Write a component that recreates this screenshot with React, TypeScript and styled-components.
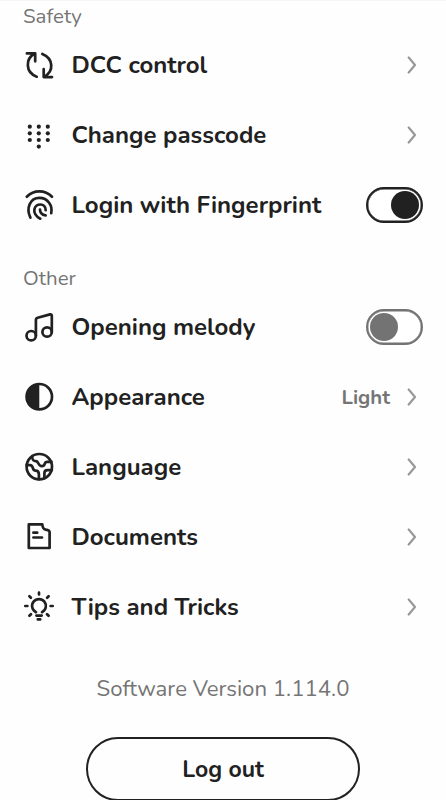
import React, { useState } from 'react';
import styled, { createGlobalStyle } from 'styled-components';

const GlobalStyle = createGlobalStyle`
  * {
    box-sizing: border-box;
  }

  body {
    margin: 0;
    background: #fefefe;
    color: #212121;
    font-family: Nunito, Lato, "Open Sans", sans-serif;
    overflow: hidden;
  }
`

const RefreshIcon = () => (
  <Icon viewBox="0 0 32 32">
    <path d="M3.9 4.4H12.2V12.3M11.8 4.8C2.2 9.5 2.2 23.5 13.7 27.7" />
    <path d="M19.3 5C30.6 9.6 31.2 22.3 21.2 27.6M20.7 20.2V28.1H29" />
  </Icon>
)

const KeypadIcon = () => (
  <Icon viewBox="0 0 32 32">
    <g fill="currentColor" stroke="none">
      {[7.7, 14.3, 21].map((y) =>
        [6.8, 15.8, 24.8].map((x) => <circle key={`${x}-${y}`} cx={x} cy={y} r="2.1" />)
      )}
      <circle cx="15.8" cy="27.6" r="2.1" />
    </g>
  </Icon>
)

const FingerprintIcon = () => (
  <Icon viewBox="0 0 32 32">
    <path d="M3.8 7.7C10.8 .5 22 .5 29 7.7" />
    <path d="M7.4 28.7C2.8 19 7.2 8.9 16.4 8.9C24.8 8.9 29.9 16.6 28.2 24.2" />
    <path d="M17.3 29.7C12.8 27.5 10.7 23.4 11.4 20.2C12.7 13.8 22.7 13.7 22.7 21.2" />
    <path d="M17 20.6C17 23.8 18.8 26 22.6 26.4" />
  </Icon>
)

const MusicIcon = () => (
  <Icon viewBox="0 0 32 32">
    <circle cx="8.2" cy="24.7" r="4.7" />
    <circle cx="24.1" cy="21" r="4.7" />
    <path d="M12.9 24.7V9Q12.9 7.2 14.7 6.7L27 3.4Q28.8 3 28.8 4.8V21" />
  </Icon>
)

const ContrastIcon = () => (
  <Icon viewBox="0 0 32 32">
    <circle cx="16.3" cy="15.7" r="12.7" />
    <path d="M16.3 3A12.7 12.7 0 0 0 16.3 28.4Z" fill="currentColor" stroke="none" />
  </Icon>
)

const GlobeIcon = () => (
  <Icon viewBox="0 0 32 32">
    <circle cx="16.3" cy="15.7" r="12.7" />
    <path d="M9.2 5.2C9.2 9 10.2 10 13 10.2C16 10.4 14.9 15.2 18.9 15.2C23 15.2 20.5 10.8 24 10.8H28.5" />
    <path d="M3.7 14.1H7C11.2 14.1 8.5 19.7 12.5 19.7C15.6 19.7 15.9 21.4 15.9 23.5V28.2" />
    <path d="M28.8 19.2H24.5Q21.4 19.2 21.4 22.3V27.2" />
  </Icon>
)

const DocumentIcon = () => (
  <Icon viewBox="0 0 32 32">
    <path d="M5.8 3.4H19.3Q19.8 8.2 22.6 8.6Q26.6 9.2 26.6 11V27H5.8Z" />
    <path d="M10.4 11.7H14.2M10.4 16.5H19" />
  </Icon>
)

const BulbIcon = () => (
  <Icon viewBox="0 0 32 32">
    <path d="M13 21.2A6.9 6.9 0 1 1 19 21.2" />
    <path d="M13.4 24.6H18.7M14.8 28.4H17.2" />
    <path d="M16 1.7V3.5M2.3 15H4.4M27.6 15H29.7M6.4 5.2L7.9 6.7M25.6 5.2L24.1 6.7M6.4 24.8L8 23.2M25.6 24.8L24 23.2" />
  </Icon>
)

const Chevron = () => (
  <ChevronIcon viewBox="0 0 10 18">
    <path d="M1.7 1.5L8 9L1.7 16.5" />
  </ChevronIcon>
)

interface Item {
  label: string
  icon: React.ReactNode
  value?: string
  toggle?: boolean
  on?: boolean
}

const safetyItems: Item[] = [
  { label: 'DCC control', icon: <RefreshIcon /> },
  { label: 'Change passcode', icon: <KeypadIcon /> },
  { label: 'Login with Fingerprint', icon: <FingerprintIcon />, toggle: true, on: true },
]

const otherItems: Item[] = [
  { label: 'Opening melody', icon: <MusicIcon />, toggle: true },
  { label: 'Appearance', icon: <ContrastIcon />, value: 'Light' },
  { label: 'Language', icon: <GlobeIcon /> },
  { label: 'Documents', icon: <DocumentIcon /> },
  { label: 'Tips and Tricks', icon: <BulbIcon /> },
]

const SettingsRow = ({ label, icon, value, toggle, on = false }: Item) => {
  const [isOn, setIsOn] = useState(on);

  return (
    <Row>
      {icon}
      <Label>{label}</Label>
      {value && <Value>{value}</Value>}
      {toggle ? (
        <Toggle $on={isOn} role="switch" aria-checked={isOn} aria-label={label} onClick={() => setIsOn(!isOn)}>
          <Knob />
        </Toggle>
      ) : (
        <Chevron />
      )}
    </Row>
  )
}

const App = () => {
  return (
    <Screen>
      <GlobalStyle />
      <SectionTitle>Safety</SectionTitle>
      {safetyItems.map((item) => <SettingsRow key={item.label} {...item} />)}
      <SectionTitle $gap>Other</SectionTitle>
      {otherItems.map((item) => <SettingsRow key={item.label} {...item} />)}
      <Version>Software Version 1.114.0</Version>
      <LogoutButton>Log out</LogoutButton>
    </Screen>
  )
}

export default App;

const Screen = styled.main`
  display: flex;
  flex-direction: column;
  width: 446px;
  height: 800px;
  padding: 1px 23px 0;
  border-top: 1px solid #f5f5f5;
  overflow: hidden;
`

const SectionTitle = styled.h2<{ $gap?: boolean }>`
  height: 28px;
  margin: ${({ $gap }) => ($gap ? '24px 0 0' : '0')};
  color: #757575;
  font-size: 20.5px;
  font-weight: 400;
  line-height: 28px;
`

const Row = styled.div`
  display: flex;
  align-items: center;
  flex-shrink: 0;
  height: 70px;
`

const Icon = styled.svg`
  width: 32px;
  height: 32px;
  flex-shrink: 0;
  fill: none;
  stroke: currentColor;
  stroke-width: 2.7;
  stroke-linecap: round;
  stroke-linejoin: round;
`

const Label = styled.span`
  flex: 1;
  margin-left: 16.5px;
  font-size: 24px;
  font-weight: 700;
  line-height: 32px;
  white-space: nowrap;
`

const Value = styled.span`
  margin-right: 17px;
  color: #757575;
  font-size: 20.3px;
  font-weight: 700;
`

const ChevronIcon = styled.svg`
  width: 10px;
  height: 18px;
  margin-right: 6px;
  fill: none;
  stroke: #999;
  stroke-width: 2.2;
  stroke-linecap: round;
  stroke-linejoin: round;
`

const Toggle = styled.button<{ $on: boolean }>`
  display: flex;
  align-items: center;
  justify-content: ${({ $on }) => ($on ? 'flex-end' : 'flex-start')};
  width: 57px;
  height: 36px;
  padding: 0 2px;
  border: 2px solid currentColor;
  border-radius: 18px;
  background: #fff;
  box-shadow: inset 0 0 0 0.4px currentColor;
  color: ${({ $on }) => ($on ? '#212121' : '#737373')};
`

const Knob = styled.span`
  width: 28px;
  height: 28px;
  border-radius: 50%;
  background: currentColor;
`

const Version = styled.p`
  margin: 32px 0 0;
  color: #757575;
  font-size: 22.2px;
  line-height: 30px;
  text-align: center;
`

const LogoutButton = styled.button`
  flex-shrink: 0;
  align-self: center;
  width: 274px;
  height: 64px;
  margin-top: 33px;
  border: 2px solid #212121;
  border-radius: 32px;
  background: #fefefe;
  color: #212121;
  font-family: inherit;
  font-size: 23px;
  font-weight: 700;
`
